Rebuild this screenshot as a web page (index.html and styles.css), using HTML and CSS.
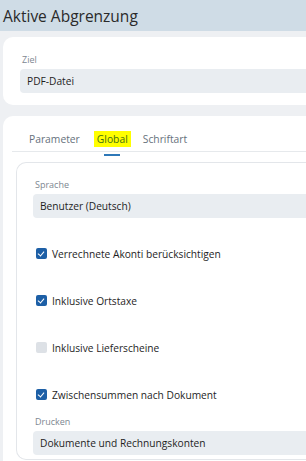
FILE: index.html
```html
<!DOCTYPE html>
<html>
<head>
  <title>Aktive Abgrenzung</title>
  <link rel="stylesheet" href="styles.css">
</head>
<body>
  <div class="topbar">
    <h1>Aktive Abgrenzung</h1>
  </div>

  <div class="page">
    <div class="card card-target">
      <div class="field">
        <label>Ziel</label>
        <div class="select">PDF-Datei</div>
      </div>
    </div>

    <div class="card card-tabs">
      <div class="tabs">
        <span class="tab">Parameter</span>
        <span class="tab active"><mark>Global</mark></span>
        <span class="tab">Schriftart</span>
      </div>

      <div class="panel">
        <div class="field">
          <label>Sprache</label>
          <div class="select">Benutzer (Deutsch)</div>
        </div>

        <div class="check-list">
          <div class="check-row">
            <span class="box checked"></span>
            <span>Verrechnete Akonti berücksichtigen</span>
          </div>
          <div class="check-row">
            <span class="box checked"></span>
            <span>Inklusive Ortstaxe</span>
          </div>
          <div class="check-row">
            <span class="box"></span>
            <span>Inklusive Lieferscheine</span>
          </div>
          <div class="check-row">
            <span class="box checked"></span>
            <span>Zwischensummen nach Dokument</span>
          </div>
        </div>

        <div class="field field-last">
          <label>Drucken</label>
          <div class="select">Dokumente und Rechnungskonten</div>
        </div>
      </div>
    </div>
  </div>
</body>
</html>
```

FILE: styles.css
```css
body {
  margin: 0;
  font-family: "Open Sans", Arial, sans-serif;
  background-color: #eef0f3;
  color: #222;
  overflow: hidden;
  height: 461px;
}

.topbar {
  height: 31px;
  background-color: #cfdce6;
  padding-left: 3px;
  display: flex;
  align-items: center;
}

.topbar h1 {
  margin: 0;
  font-size: 15.5px;
  font-weight: normal;
  color: #2a2a2a;
}

.page {
  padding: 6px 0 0 3px;
  display: flex;
  flex-direction: column;
  gap: 11px;
}

.card {
  background-color: #fff;
  border-radius: 10px 0 0 10px;
}

.card-target {
  padding: 17px 0 12px 17px;
}

.field label {
  display: block;
  font-size: 9px;
  color: #7d8791;
  margin: 0 0 3px 2px;
  line-height: 12px;
}

.select {
  height: 24px;
  line-height: 24px;
  background-color: #e9edf1;
  border-radius: 4px 0 0 4px;
  padding-left: 7px;
  font-size: 10.2px;
  color: #1e1e1e;
}

.card-tabs {
  padding: 15px 0 0 0;
  height: 340px;
}

.tabs {
  display: flex;
  margin-left: 9px;
  padding-left: 17px;
  border-bottom: 1px solid #e6e9ec;
  height: 20px;
}

.tab {
  font-size: 10.3px;
  color: #66717c;
  margin-right: 14px;
  position: relative;
  line-height: 16px;
}

.tab mark {
  display: inline-block;
  line-height: 16px;
  background-color: #ffff00;
  color: #3f6f12;
  padding: 0 3px;
}

.tab.active {
  margin-right: 12px;
}

.tab.active::after {
  content: "";
  position: absolute;
  left: 50%;
  margin-left: -8px;
  bottom: -5px;
  width: 16px;
  height: 2px;
  background-color: #2e78b8;
}

.panel {
  margin: 10px 0 0 13px;
  border: 1px solid #e3e6ea;
  border-right: none;
  border-radius: 10px 0 0 10px;
  padding: 16px 0 4px 16px;
}

.check-list {
  padding: 12px 0 0 0;
}

.check-row {
  height: 47px;
  display: flex;
  align-items: center;
  gap: 5px;
  padding-left: 3px;
  font-size: 10.2px;
  color: #1e1e1e;
}

.field-last {
  margin-top: -2px;
}

.box {
  width: 11px;
  height: 11px;
  border-radius: 2px;
  background-color: #dde1e6;
  box-sizing: border-box;
  flex-shrink: 0;
}

.box.checked {
  background-color: #1d5fa6;
  position: relative;
}

.box.checked::after {
  content: "";
  position: absolute;
  left: 3px;
  top: 1.5px;
  width: 3px;
  height: 5px;
  border: solid #fff;
  border-width: 0 1.5px 1.5px 0;
  transform: rotate(40deg);
}
```
